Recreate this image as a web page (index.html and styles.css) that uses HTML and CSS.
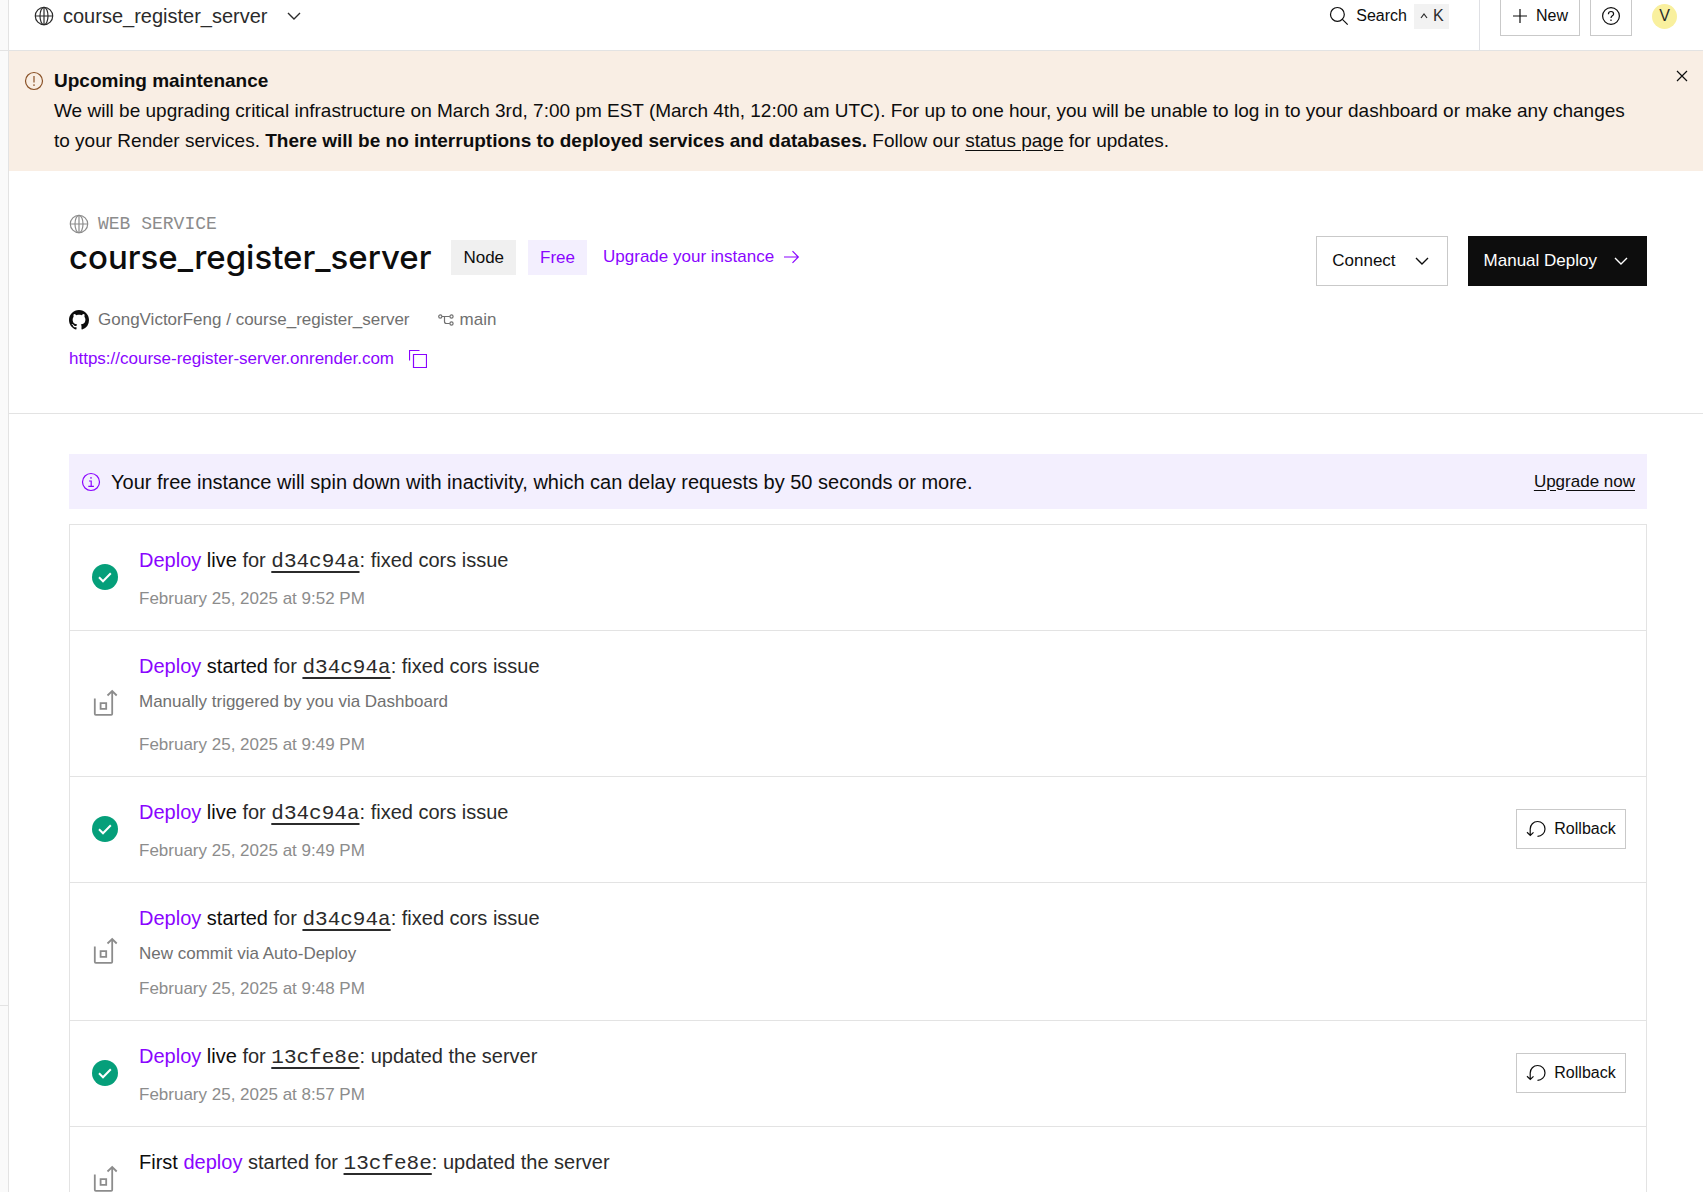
FILE: index.html
```html
<!DOCTYPE html>
<html lang="en">
<head>
<meta charset="utf-8">
<meta name="viewport" content="width=device-width, initial-scale=1">
<title>course_register_server · Web Service</title>
<link rel="stylesheet" href="styles.css">
</head>
<body>
<svg class="sprite" aria-hidden="true">
  <symbol id="globe" viewBox="0 0 20 20"><circle cx="10" cy="10" r="8.7"/><ellipse cx="10" cy="10" rx="4" ry="8.7"/><path d="M10 1.3v17.4M1.3 10h17.4"/></symbol>
  <symbol id="chevron" viewBox="0 0 14 14"><path d="M1 4l6 6 6-6"/></symbol>
  <symbol id="check" viewBox="0 0 26 26"><circle class="disc" cx="13" cy="13" r="13"/><path class="tick" d="M7 13.3l4 4 7.8-8"/></symbol>
  <symbol id="launch" viewBox="0 0 26 28"><path d="M2.8 9.500v15.300a1 1 0 0 0 1 1h15.400a1 1 0 0 0 1-1V2M15.500 6.500L20.200 2l4.500 4.500"/><path d="M8.600 14.200h5.600v5.600H8.600z"/></symbol>
  <symbol id="undo" viewBox="0 0 20 18"><path d="M11.500 16.300A7.400 7.400 0 1 0 4.200 9v6.300M1 12.300l3.300 3.200 3.200-3.200"/></symbol>
</svg>
<div class="app">
  <aside class="sidebar">
    <div class="sidebar-top"></div>
    <div class="sidebar-foot"></div>
  </aside>
  <div class="page">
    <header class="topbar">
      <button class="crumb" type="button">
        <svg class="icon20"><use href="#globe"/></svg>
        <span>course_register_server</span>
        <svg class="chev"><use href="#chevron"/></svg>
      </button>
      <div class="tools">
        <button class="search" type="button">
          <svg class="icon20" viewBox="0 0 20 20"><circle cx="8.400" cy="8.400" r="6.900"/><path d="M13.400 13.400l5.300 5.300"/></svg>
          <span>Search</span>
          <kbd><svg class="caret" viewBox="0 0 8 6"><path d="M1 5l3-4 3 4"/></svg>K</kbd>
        </button>
        <div class="account">
          <button class="box new" type="button"><svg class="plus" viewBox="0 0 16 16"><path d="M8 1v14M1 8h14"/></svg>New</button>
          <button class="box help" type="button" aria-label="Help"><svg class="icon20" viewBox="0 0 20 20"><circle cx="10" cy="10" r="8.400"/><path d="M7.400 8.200c0-1.700 1.100-2.700 2.600-2.700s2.600.9 2.600 2.400c0 1.900-2.600 2-2.600 4"/><path d="M10 13.500v1.600"/></svg></button>
          <button class="avatar" type="button">V</button>
        </div>
      </div>
    </header>

    <section class="notice">
      <svg class="icon20 notice-icon" viewBox="0 0 20 20"><circle cx="10" cy="10" r="8.500"/><path d="M10 5v6.500M10 13.300v1.600"/></svg>
      <div class="notice-text">
        <h2>Upcoming maintenance</h2>
        <p>We will be upgrading critical infrastructure on March 3rd, 7:00 pm EST (March 4th, 12:00 am UTC). For up to one hour, you will be unable to log in to your dashboard or make any changes to your Render services. <strong>There will be no interruptions to deployed services and databases.</strong> Follow our <a href="#status">status page</a> for updates.</p>
      </div>
      <button class="close" type="button" aria-label="Dismiss"><svg viewBox="0 0 12 12"><path d="M1 1l10 10M11 1L1 11"/></svg></button>
    </section>

    <section class="service">
      <div class="service-info">
        <div class="kicker"><svg class="icon20"><use href="#globe"/></svg>WEB SERVICE</div>
        <div class="title-row">
          <h1>course_register_server</h1>
          <span class="chip">Node</span>
          <span class="chip free">Free</span>
          <a class="upgrade" href="#upgrade">Upgrade your instance<svg class="arrow" viewBox="0 0 17 14"><path d="M1 7h14M9.500 1.200L15.300 7l-5.800 5.800"/></svg></a>
        </div>
        <div class="repo">
          <svg class="github" viewBox="0 0 16 16"><path d="M8 0C3.580 0 0 3.580 0 8c0 3.540 2.290 6.530 5.470 7.590.4.070.55-.17.55-.38 0-.19-.01-.82-.01-1.490-2.010.37-2.530-.49-2.690-.94-.09-.23-.48-.94-.82-1.130-.28-.15-.68-.52-.01-.53.63-.01 1.080.58 1.230.82.72 1.210 1.870.87 2.330.66.070-.52.28-.87.51-1.070-1.780-.2-3.640-.89-3.640-3.950 0-.87.31-1.590.82-2.150-.08-.2-.36-1.020.08-2.120 0 0 .67-.21 2.200.82.64-.18 1.320-.27 2-.27s1.360.09 2 .27c1.530-1.040 2.200-.82 2.200-.82.44 1.100.16 1.920.08 2.120.51.56.82 1.270.82 2.150 0 3.070-1.870 3.750-3.650 3.950.29.25.54.73.54 1.480 0 1.070-.01 1.930-.01 2.200 0 .21.15.46.55.38A8.010 8.010 0 0 0 16 8c0-4.420-3.580-8-8-8z"/></svg>
          <a href="#repo">GongVictorFeng / course_register_server</a>
          <a class="branch" href="#branch"><svg viewBox="0 0 16 12"><circle cx="2.300" cy="2.500" r="1.600"/><circle cx="13.500" cy="2.500" r="1.600"/><circle cx="13.500" cy="9.500" r="1.600"/><path d="M4 2.500h7.800M6.500 2.500v5a2 2 0 0 0 2 2h3.300"/></svg>main</a>
        </div>
        <div class="url">
          <a href="#open">https://course-register-server.onrender.com</a>
          <button type="button" aria-label="Copy URL"><svg viewBox="0 0 18 18"><path d="M4.500 4.500h13v13h-13zM.5 10.500V.5h10"/></svg></button>
        </div>
      </div>
      <div class="actions">
        <button class="action" type="button">Connect<svg class="chev"><use href="#chevron"/></svg></button>
        <button class="action primary" type="button">Manual Deploy<svg class="chev"><use href="#chevron"/></svg></button>
      </div>
    </section>

    <main class="events">
      <div class="spin-down">
        <svg class="icon20" viewBox="0 0 20 20"><circle cx="10" cy="10" r="8.500"/><path d="M8 9h2.200v5.200M7.300 14.300h5.600M10 5v1.700"/></svg>
        <p>Your free instance will spin down with inactivity, which can delay requests by 50 seconds or more.</p>
        <a href="#upgrade">Upgrade now</a>
      </div>
      <ul class="event-list">
        <li>
          <svg class="status"><use href="#check"/></svg>
          <div class="event">
            <h3><a class="deploy" href="#d1">Deploy</a> <b>live</b> for <a class="hash" href="#c1">d34c94a</a>: fixed cors issue</h3>
            <time>February 25, 2025 at 9:52 PM</time>
          </div>
        </li>
        <li>
          <svg class="launch"><use href="#launch"/></svg>
          <div class="event manual">
            <h3><a class="deploy" href="#d2">Deploy</a> <b>started</b> for <a class="hash" href="#c1">d34c94a</a>: fixed cors issue</h3>
            <p>Manually triggered by you via Dashboard</p>
            <time>February 25, 2025 at 9:49 PM</time>
          </div>
        </li>
        <li>
          <svg class="status"><use href="#check"/></svg>
          <div class="event">
            <h3><a class="deploy" href="#d3">Deploy</a> <b>live</b> for <a class="hash" href="#c1">d34c94a</a>: fixed cors issue</h3>
            <time>February 25, 2025 at 9:49 PM</time>
          </div>
          <button class="box rollback" type="button"><svg><use href="#undo"/></svg>Rollback</button>
        </li>
        <li>
          <svg class="launch"><use href="#launch"/></svg>
          <div class="event">
            <h3><a class="deploy" href="#d4">Deploy</a> <b>started</b> for <a class="hash" href="#c1">d34c94a</a>: fixed cors issue</h3>
            <p>New commit via Auto-Deploy</p>
            <time>February 25, 2025 at 9:48 PM</time>
          </div>
        </li>
        <li>
          <svg class="status"><use href="#check"/></svg>
          <div class="event">
            <h3><a class="deploy" href="#d5">Deploy</a> <b>live</b> for <a class="hash" href="#c2">13cfe8e</a>: updated the server</h3>
            <time>February 25, 2025 at 8:57 PM</time>
          </div>
          <button class="box rollback" type="button"><svg><use href="#undo"/></svg>Rollback</button>
        </li>
        <li>
          <svg class="launch"><use href="#launch"/></svg>
          <div class="event">
            <h3><b>First</b> <a class="deploy" href="#d6">deploy</a> started for <a class="hash" href="#c2">13cfe8e</a>: updated the server</h3>
          </div>
        </li>
      </ul>
    </main>
  </div>
</div>
</body>
</html>
```
FILE: styles.css
```css
* { box-sizing: border-box; }
body {
  margin: 0;
  height: 100vh;
  overflow: hidden;
  font-family: "Liberation Sans", Arial, sans-serif;
  font-size: 17px;
  line-height: 24px;
  color: #0d0d0d;
  background: #fff;
}
h1, h2, h3, p, ul { margin: 0; padding: 0; font-weight: 400; }
ul { list-style: none; }
a { color: inherit; text-decoration: none; }
button { font: inherit; color: inherit; background: none; border: 0; padding: 0; display: flex; align-items: center; }
svg { flex: none; display: block; fill: none; stroke: currentColor; stroke-width: 1.2; }
.sprite { position: absolute; width: 0; height: 0; }
.icon20 { width: 20px; height: 20px; }
.chev { width: 14px; height: 14px; stroke-width: 1.4; }

.app { display: flex; height: 100vh; }
.sidebar { flex: none; width: 9px; background: #fafafa; border-right: 1px solid #e3e3e3; display: flex; flex-direction: column; justify-content: space-between; }
.sidebar-top { height: 51px; border-bottom: 1px solid #e3e3e3; }
.sidebar-foot { height: 187px; border-top: 1px solid #e3e3e3; }
.page { flex: 1; min-width: 0; overflow: hidden; }

/* Top bar, scrolled partly under the top of the window */
.topbar { height: 71px; margin-top: -20px; border-bottom: 1px solid #e3e3e3; display: flex; justify-content: space-between; padding: 0 26px 0 25px; }
.crumb { gap: 9px; padding-top: 2px; font-size: 20px; color: #2b2b2b; }
.crumb .chev { margin-left: 10px; }
.tools { display: flex; font-size: 16px; }
.search { gap: 7px; padding-top: 2px; margin-right: 30px; }
.search kbd { font: inherit; display: flex; align-items: center; gap: 5px; height: 25px; width: 35px; padding: 0 6px; background: #f2f2f2; color: #2b2b2b; }
.caret { width: 8px; height: 6px; }
.account { display: flex; align-items: center; border-left: 1px solid #dfe0e4; padding: 2px 0 0 20px; }
.box { border: 1px solid #c9c9c9; background: #fff; justify-content: center; font-size: 16px; height: 40px; }
.new { width: 80px; gap: 8px; margin-right: 10px; }
.plus { width: 16px; height: 16px; }
.help { width: 42px; margin-right: 20px; }
.avatar { width: 25px; height: 25px; border-radius: 50%; background: #f9f09e; justify-content: center; font-size: 16px; color: #2b2b2b; }

.notice { display: flex; align-items: flex-start; background: #f9eee4; padding: 15px; font-size: 19px; line-height: 30px; }
.notice-icon { margin-top: 5px; color: #8a5126; }
.notice-text { flex: 1; margin-left: 10px; padding-right: 40px; }
.notice h2 { font-size: 19px; font-weight: 700; }
.notice a { text-decoration: underline; text-underline-offset: 3px; }
.close { margin-top: 4px; }
.close svg { width: 12px; height: 12px; }

.service { display: flex; justify-content: space-between; align-items: flex-start; padding: 41px 56px 42px 60px; border-bottom: 1px solid #e3e3e3; }
.kicker { display: flex; align-items: center; gap: 9px; color: #8c8c8c; font-family: "Liberation Mono", monospace; font-size: 18px; }
.title-row { display: flex; align-items: center; height: 36px; margin-top: 3px; }
h1 { font-family: Inter, sans-serif; font-size: 33px; font-weight: 500; line-height: 36px; margin-right: 20px; }
.chip { height: 35px; line-height: 35px; padding: 0 12px; background: #f0f0f0; margin-right: 12px; }
.chip.free { background: #f3effe; color: #8a05ff; }
.upgrade { display: flex; align-items: center; gap: 9px; margin-left: 4px; color: #8a05ff; }
.arrow { width: 17px; height: 14px; }
.repo { display: flex; align-items: center; margin-top: 33px; color: #707070; }
.github { width: 20px; height: 20px; margin-right: 9px; fill: #0d0d0d; stroke: none; }
.branch { display: flex; align-items: center; gap: 6px; margin-left: 28px; }
.branch svg { width: 16px; height: 12px; }
.url { display: flex; align-items: center; gap: 15px; margin-top: 15px; color: #8a05ff; }
.url svg { width: 18px; height: 18px; }
.actions { display: flex; gap: 20px; margin-top: 24px; }
.action { height: 50px; padding: 0 18px 0 15px; gap: 19px; border: 1px solid #c9c9c9; }
.primary { gap: 17px; background: #0d0d0d; border-color: #0d0d0d; color: #fff; }

.events { padding: 40px 56px 0 60px; }
.spin-down { display: flex; align-items: center; height: 55px; padding: 0 12px; background: #f3effe; margin-bottom: 15px; }
.spin-down svg { color: #8a05ff; }
.spin-down p { flex: 1; margin-left: 10px; font-size: 20px; }
.spin-down a { text-decoration: underline; text-underline-offset: 3px; }
.event-list { border: 1px solid #e3e3e3; border-top: 0; }
.event-list li { display: flex; align-items: center; min-height: 106px; border-top: 1px solid #e3e3e3; padding: 19px 20px 19px 22px; }
.status, .launch { width: 26px; height: 26px; margin: 0 21px 1px 0; }
.launch { height: 28px; color: #8c8c8c; stroke-width: 1.8; }
.disc { fill: #059f7a; stroke: none; }
.tick { stroke: #fff; stroke-width: 2; }
.event { flex: 1; align-self: flex-start; display: flex; flex-direction: column; }
.event h3 { font-size: 20px; line-height: 32px; color: #2b2b2b; }
.event b { font-weight: 400; color: #0d0d0d; }
.event p { margin-top: 8px; color: #707070; }
.event time { margin-top: 11px; color: #8c8c8c; }
.manual time { margin-top: 19px; }
.deploy { color: #8a05ff; }
.hash { font-family: "Liberation Mono", monospace; font-size: 21px; line-height: 24px; text-decoration: underline; text-decoration-thickness: 2px; text-underline-offset: 4px; }
.rollback { width: 110px; height: 40px; gap: 8px; margin-bottom: 1px; }
.rollback svg { width: 20px; height: 18px; }
```
